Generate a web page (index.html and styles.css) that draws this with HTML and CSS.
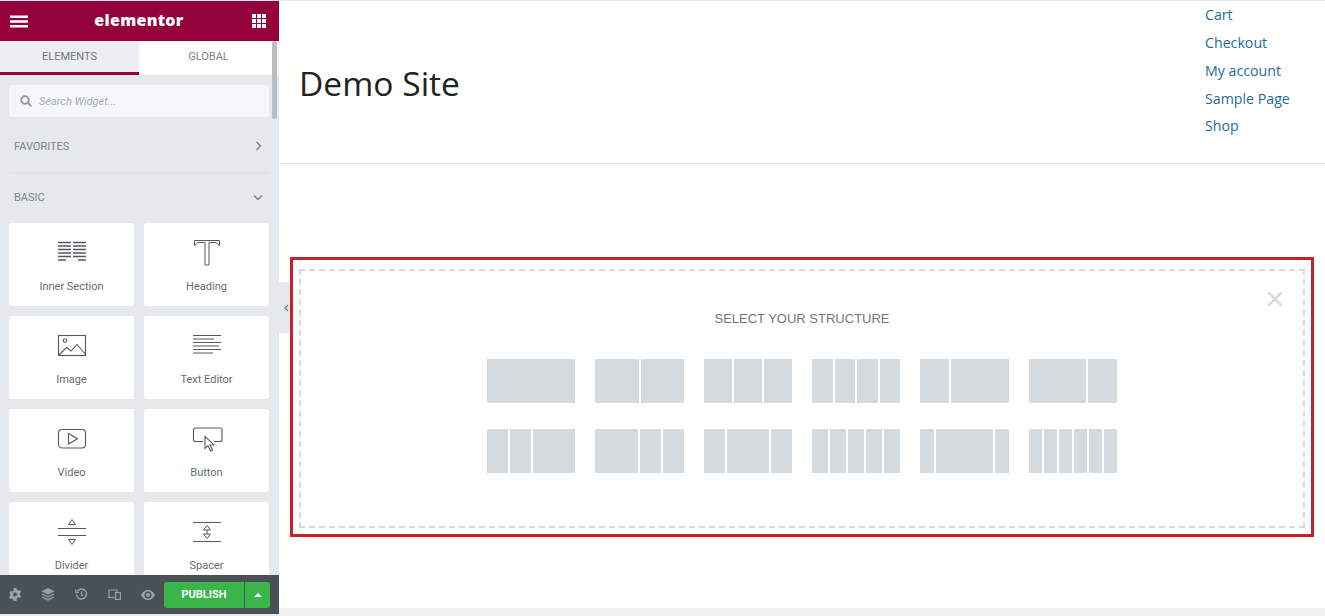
FILE: index.html
```html
<!DOCTYPE html>
<html lang="en">
<head>
<meta charset="utf-8">
<title>Elementor</title>
<link rel="stylesheet" href="styles.css">
</head>
<body>
<div class="app">
  <aside class="panel">
    <header class="panel-head">
      <svg class="head-icon" width="18" height="13" viewBox="0 0 18 13"><path d="M0 0.5h18v2.400H0zM0 5.300h18v2.400H0zM0 10.100h18v2.400H0z" fill="#fff"/></svg>
      <span class="logo">elementor</span>
      <svg class="head-icon" width="14" height="14" viewBox="0 0 14 14" fill="#fff"><path d="M0 0h4v3.900H0zM5 0h4v3.900H5zM10 0h4v3.900h-4zM0 5h4v3.900H0zM5 5h4v3.900H5zM10 5h4v3.900h-4zM0 10h4v3.900H0zM5 10h4v3.900H5zM10 10h4v3.900h-4z"/></svg>
    </header>
    <div class="panel-body">
      <div class="scrollbar"></div>
      <nav class="tabs">
        <div class="tab tab-active">ELEMENTS</div>
        <div class="tab">GLOBAL</div>
      </nav>
      <div class="search">
        <svg width="12" height="12" viewBox="0 0 12 12" fill="none" stroke="#8f969c" stroke-width="1.800"><circle cx="5" cy="5" r="3.800"/><path d="M8 8l3.400 3.400"/></svg>
        <span>Search Widget...</span>
      </div>
      <div class="cat cat-fav">
        <span>FAVORITES</span>
        <svg width="7" height="10" viewBox="0 0 7 10" fill="none" stroke="#7d848a" stroke-width="1.500"><path d="M1.500 1l4 4-4 4"/></svg>
      </div>
      <div class="cat-rule"></div>
      <div class="cat cat-basic">
        <span>BASIC</span>
        <svg width="10" height="7" viewBox="0 0 10 7" fill="none" stroke="#7d848a" stroke-width="1.500"><path d="M1 1.500l4 4 4-4"/></svg>
      </div>
      <div class="cards">
        <div class="card">
          <svg class="ico" width="32" height="32" viewBox="0 0 32 32" fill="none" stroke="#55595e"><path d="M2 5.500h13M17 5.500h13M2 9h13M17 9h13M2 12.500h13M17 12.500h13M2 16h13M17 16h13M2 19.500h13M17 19.500h13M2 23h8M22 23h8" stroke-width="1.500"/></svg>
          <span>Inner Section</span>
        </div>
        <div class="card">
          <svg class="ico" width="32" height="32" viewBox="0 0 32 32" fill="none" stroke="#55595e" stroke-width="1"><path d="M3.500 8.500V3.500h25v5l-1-.5c-.5-1.500-1.500-2.500-3.500-2.500h-6v22.500h-4V5.500H8C6 5.500 5 6.500 4.500 8z"/></svg>
          <span>Heading</span>
        </div>
        <div class="card">
          <svg class="ico" width="32" height="32" viewBox="0 0 32 32" fill="none" stroke="#55595e" stroke-width="1.100"><rect x="2.500" y="5.500" width="27" height="20"/><circle cx="9" cy="10.500" r="1.800"/><path d="M2.500 25.500l8-8 4.500 3.500 6-6.500 8.500 10"/></svg>
          <span>Image</span>
        </div>
        <div class="card">
          <svg class="ico" width="32" height="32" viewBox="0 0 32 32" fill="none" stroke="#55595e" stroke-width="1"><path d="M2 5.500h28M2 9h21M2 12.500h28M2 16h26M2 19.500h28M2 23h20"/></svg>
          <span>Text Editor</span>
        </div>
        <div class="card">
          <svg class="ico" width="32" height="32" viewBox="0 0 32 32" fill="none" stroke="#55595e" stroke-width="1.100"><rect x="2.500" y="6.500" width="27" height="18.500" rx="3.500"/><path d="M12.500 10.500v10.500l9-5.300z"/></svg>
          <span>Video</span>
        </div>
        <div class="card">
          <svg class="ico" width="32" height="32" viewBox="0 0 32 32" fill="none" stroke="#55595e" stroke-width="1.100"><path d="M12 18.500H4.500q-2 0-2-2V6.500q0-1.500 2-1.500h25q1.500 0 1.500 1.500v10q0 2-2 2h-6"/><path d="M14 13.500v12l3-2.800 2.500 5.300 2-1-2.500-5 4-.3z"/></svg>
          <span>Button</span>
        </div>
        <div class="card">
          <svg class="ico" width="32" height="32" viewBox="0 0 32 32" fill="none" stroke="#55595e" stroke-width="1"><path d="M2 12.500h28M2 19.500h28M12.500 8.500L16 3.500l3.500 5zM12.500 23.500L16 28.500l3.500-5z"/></svg>
          <span>Divider</span>
        </div>
        <div class="card">
          <svg class="ico" width="32" height="32" viewBox="0 0 32 32" fill="none" stroke="#55595e" stroke-width="1"><path d="M2 6.500h28M2 25.500h28M12.500 14L16 9.500l3.500 4.500zM12.500 18L16 22.500l3.500-4.500zM16 14v4"/></svg>
          <span>Spacer</span>
        </div>
      </div>
    </div>
    <footer class="panel-foot">
      <div class="foot-icons">
        <svg width="12" height="13" viewBox="0 0 12 13"><path fill="#98a2aa" fill-rule="evenodd" d="M4.500 0h3l.4 1.800 1.300.7 1.800-.6 1.100 2-1.300 1.300v1.600l1.300 1.300-1.100 2-1.800-.6-1.300.8L7.500 13h-3l-.4-1.700-1.300-.8-1.800.6-1.100-2 1.300-1.300V6.200L.4 4.900l1.100-2 1.800.6 1.300-.7zM6 4.500a2 2 0 1 0 0 4 2 2 0 0 0 0-4z"/></svg>
        <svg width="14" height="13" viewBox="0 0 14 13" fill="#98a2aa"><path d="M7 0l6.500 3.300L7 6.600.5 3.300z"/><path d="M1.800 5.500L7 8.100l5.200-2.600 1.300.8L7 9.600.5 6.300z"/><path d="M1.800 8.500L7 11.100l5.200-2.600 1.300.8L7 12.700.5 9.300z"/></svg>
        <svg width="13" height="13" viewBox="0 0 13 13" fill="none" stroke="#98a2aa" stroke-width="1.500"><path d="M2.300 3.300A5 5 0 1 1 1.500 6.500"/><path d="M.8 1.500v3h3" stroke-width="1.200"/><path d="M6.500 3.500v3.300l2 1.200" stroke-width="1.300"/></svg>
        <svg width="13" height="11" viewBox="0 0 13 11" fill="none" stroke="#98a2aa" stroke-width="1.200"><path d="M1 8V1h8v2"/><path d="M0 8.500h6.500"/><rect x="7.500" y="3.500" width="5" height="7"/></svg>
        <svg width="14" height="10" viewBox="0 0 14 10"><path fill="#98a2aa" fill-rule="evenodd" d="M7 0c3 0 5.500 2 7 5-1.500 3-4 5-7 5S1.500 8 0 5c1.500-3 4-5 7-5zm0 1.500a3.500 3.500 0 1 0 0 7 3.500 3.500 0 0 0 0-7zM7 3a2 2 0 1 1 0 4 2 2 0 0 1 0-4z"/></svg>
      </div>
      <div class="publish">
        <div class="publish-main">PUBLISH</div>
        <div class="publish-more"><span class="caret"></span></div>
      </div>
    </footer>
  </aside>

  <main class="preview">
    <div class="collapse">
      <svg width="5" height="8" viewBox="0 0 5 8" fill="none" stroke="#6d7882" stroke-width="1.200"><path d="M4 1L1 4l3 3"/></svg>
    </div>
    <header class="site-head">
      <h1 class="site-title">Demo Site</h1>
      <ul class="site-nav">
        <li>Cart</li>
        <li>Checkout</li>
        <li>My account</li>
        <li>Sample Page</li>
        <li>Shop</li>
      </ul>
    </header>
    <section class="marked">
      <div class="dropzone">
        <svg class="close" width="16" height="16" viewBox="0 0 16 16" fill="none" stroke="#d5dadf" stroke-width="2.600"><path d="M1.500 1.500l13 13M14.500 1.500l-13 13"/></svg>
        <div class="drop-title">SELECT YOUR STRUCTURE</div>
        <div class="structures">
          <div class="preset"><i></i></div>
          <div class="preset"><i></i><i></i></div>
          <div class="preset"><i></i><i></i><i></i></div>
          <div class="preset"><i></i><i></i><i></i><i></i></div>
          <div class="preset p-30-70"><i></i><i></i></div>
          <div class="preset p-70-30"><i></i><i></i></div>
          <div class="preset p-25-25-50"><i></i><i></i><i></i></div>
          <div class="preset p-50-25-25"><i></i><i></i><i></i></div>
          <div class="preset p-25-50-25"><i></i><i></i><i></i></div>
          <div class="preset"><i></i><i></i><i></i><i></i><i></i></div>
          <div class="preset p-16-66-16"><i></i><i></i><i></i></div>
          <div class="preset"><i></i><i></i><i></i><i></i><i></i><i></i></div>
        </div>
      </div>
    </section>
    <div class="page-foot"></div>
  </main>
</div>
</body>
</html>
```

FILE: styles.css
```css
* { box-sizing: border-box; }
html, body { margin: 0; height: 100%; overflow: hidden; background: #fff; }
body { font-family: Roboto, "Liberation Sans", sans-serif; }

.app { display: flex; width: 1325px; height: 616px; }

/* Panel */
.panel { width: 279px; height: 616px; flex: none; display: flex; flex-direction: column; background: #e6e9ec; padding-top: 1px; padding-bottom: 2px; }
.panel-head { height: 40px; flex: none; background: #93003a; display: flex; align-items: center; justify-content: space-between; padding: 0 13px 0 10px; }
.logo { color: #fff; font-family: "Open Sans", sans-serif; font-weight: 800; font-size: 16px; line-height: 20px; letter-spacing: .3px; margin: 0 2px 2px 0; }
.panel-body { flex: 1; min-height: 0; overflow: hidden; position: relative; }
.scrollbar { position: absolute; right: 2px; top: 0; width: 5px; height: 78px; border-radius: 3px; background: #b9bdc1; }

.tabs { display: flex; height: 34px; }
.tab { width: 139px; background: #fff; text-align: center; font-size: 11px; line-height: 31px; color: #7d8389; }
.tab-active { background: #eceef0; border-bottom: 3px solid #93003a; color: #6d7882; }

.search { margin: 10px 10px 0 9px; height: 32px; background: #f5f6fa; border-radius: 3px; display: flex; align-items: center; gap: 7px; padding-left: 11px; font-size: 11px; font-style: italic; color: #a4afb7; }

.cat { display: flex; justify-content: space-between; align-items: center; font-size: 11px; color: #7d848a; padding: 0 17px 0 14px; height: 14px; }
.cat-fav { margin-top: 22px; }
.cat-rule { height: 2px; margin: 19px 10px 0; background: #e1e4e7; }
.cat-basic { margin-top: 16px; padding-right: 16px; }

.cards { display: grid; grid-template-columns: 125px 125px; gap: 10px; margin: 19px 0 0 9px; }
.card { height: 83px; background: #fff; border-radius: 3px; display: flex; flex-direction: column; align-items: center; padding-top: 14px; font-size: 11px; color: #666c72; }
.ico { display: block; flex: none; }
.card span { margin-top: 11px; line-height: 14px; }

.panel-foot { height: 39px; flex: none; background: #495157; display: flex; align-items: center; justify-content: space-between; padding: 0 9px; }
.foot-icons { display: flex; align-items: center; gap: 20px; }
.publish { display: flex; height: 26px; }
.publish-main { width: 80px; background: #39b54a; color: #fff; font-size: 11px; font-weight: 700; line-height: 26px; text-align: center; border-radius: 3px 0 0 3px; }
.publish-more { width: 25px; margin-left: 1px; background: #39b54a; border-radius: 0 3px 3px 0; display: flex; align-items: center; justify-content: center; }
.caret { border-left: 4px solid transparent; border-right: 4px solid transparent; border-bottom: 4px solid #fff; }

/* Preview */
.preview { flex: 1; position: relative; display: flex; flex-direction: column; border-top: 1px solid #e8e8e8; padding-left: 1px; }
.collapse { position: absolute; left: 0; top: 281px; width: 11px; height: 51px; background: #e6e9ec; border-radius: 0 3px 3px 0; display: flex; align-items: center; justify-content: center; padding-left: 4px; }
.site-head { height: 163px; flex: none; border-bottom: 1px solid #e3e3e3; display: flex; justify-content: space-between; padding-left: 19px; }
.site-title { margin: 59px 0 0; font-family: "Open Sans", sans-serif; font-weight: 400; font-size: 33.600px; line-height: 46px; color: #222; }
.site-nav { list-style: none; margin: 0; padding: .3px 0 0; width: 120px; font-family: "Open Sans", sans-serif; font-size: 14.200px; line-height: 27.800px; color: #1f6b9a; }

.marked { margin: 93px 11px 0 10px; height: 280px; flex: none; border: 3px solid #c3222b; padding: 9px 6px 6px; background: #fff; }
.dropzone { height: 259px; border: 2px dashed #d5dadf; display: flex; flex-direction: column; align-items: center; position: relative; padding-top: 40px; }
.close { position: absolute; right: 20px; top: 20px; }
.drop-title { font-family: "Liberation Sans", Arial, sans-serif; font-size: 13px; line-height: 16px; color: #6d7882; }
.structures { display: grid; grid-template-columns: repeat(6, 88.330px); column-gap: 20px; row-gap: 26px; margin-top: 32px; }
.preset { display: flex; gap: 2px; height: 44px; }
.preset i { flex: 1; min-width: 0; background: #d5dadf; }
.p-30-70 i:nth-child(2) { flex: 2; }
.p-70-30 i:nth-child(1) { flex: 2; }
.p-25-25-50 i:nth-child(3) { flex: 2; }
.p-50-25-25 i:nth-child(1) { flex: 2; }
.p-25-50-25 i:nth-child(2) { flex: 2; }
.p-16-66-16 i:nth-child(2) { flex: 4; }

.page-foot { position: absolute; left: 0; right: 0; bottom: 0; height: 8px; background: #f1f1f1; }
```
